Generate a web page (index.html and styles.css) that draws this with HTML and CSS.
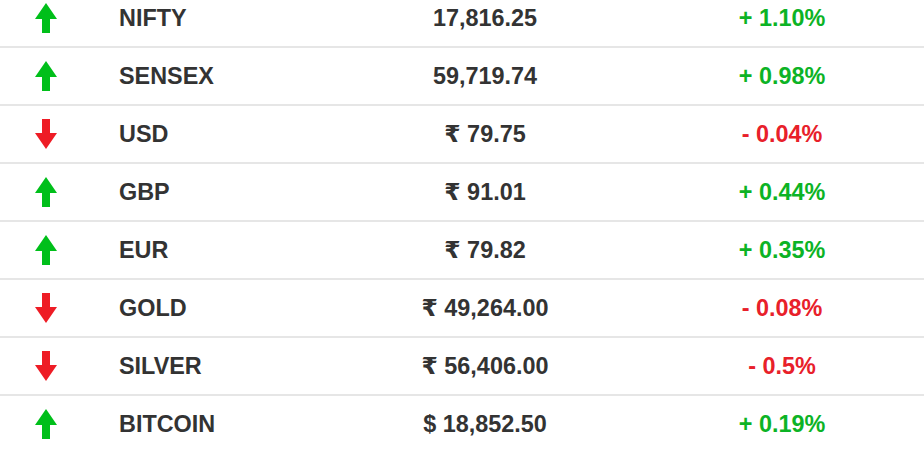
FILE: index.html
```html
<!DOCTYPE html>
<html>
<head>
<meta charset="utf-8">
<link rel="stylesheet" href="styles.css">
</head>
<body>
<div class="table">
  <div class="row"><div class="ic"><svg class="arrow up" viewBox="0 0 22 30"><path d="M11 0 L22 16 L15 16 L15 30 L7 30 L7 16 L0 16 Z"/></svg></div><div class="name">NIFTY</div><div class="val">17,816.25</div><div class="chg pos">+ 1.10%</div></div>
  <div class="row"><div class="ic"><svg class="arrow up" viewBox="0 0 22 30"><path d="M11 0 L22 16 L15 16 L15 30 L7 30 L7 16 L0 16 Z"/></svg></div><div class="name">SENSEX</div><div class="val">59,719.74</div><div class="chg pos">+ 0.98%</div></div>
  <div class="row"><div class="ic"><svg class="arrow down" viewBox="0 0 22 30"><path d="M7 0 L15 0 L15 14 L22 14 L11 30 L0 14 L7 14 Z"/></svg></div><div class="name">USD</div><div class="val">₹ 79.75</div><div class="chg neg">- 0.04%</div></div>
  <div class="row"><div class="ic"><svg class="arrow up" viewBox="0 0 22 30"><path d="M11 0 L22 16 L15 16 L15 30 L7 30 L7 16 L0 16 Z"/></svg></div><div class="name">GBP</div><div class="val">₹ 91.01</div><div class="chg pos">+ 0.44%</div></div>
  <div class="row"><div class="ic"><svg class="arrow up" viewBox="0 0 22 30"><path d="M11 0 L22 16 L15 16 L15 30 L7 30 L7 16 L0 16 Z"/></svg></div><div class="name">EUR</div><div class="val">₹ 79.82</div><div class="chg pos">+ 0.35%</div></div>
  <div class="row"><div class="ic"><svg class="arrow down" viewBox="0 0 22 30"><path d="M7 0 L15 0 L15 14 L22 14 L11 30 L0 14 L7 14 Z"/></svg></div><div class="name">GOLD</div><div class="val">₹ 49,264.00</div><div class="chg neg">- 0.08%</div></div>
  <div class="row"><div class="ic"><svg class="arrow down" viewBox="0 0 22 30"><path d="M7 0 L15 0 L15 14 L22 14 L11 30 L0 14 L7 14 Z"/></svg></div><div class="name">SILVER</div><div class="val">₹ 56,406.00</div><div class="chg neg">- 0.5%</div></div>
  <div class="row"><div class="ic"><svg class="arrow up" viewBox="0 0 22 30"><path d="M11 0 L22 16 L15 16 L15 30 L7 30 L7 16 L0 16 Z"/></svg></div><div class="name">BITCOIN</div><div class="val">$ 18,852.50</div><div class="chg pos">+ 0.19%</div></div>
</div>
</body>
</html>
```
FILE: styles.css
```css
html, body {
  margin: 0;
  padding: 0;
  background: #fff;
  overflow: hidden;
}
body {
  font-family: "Liberation Sans", Arial, "DejaVu Sans", sans-serif;
  font-weight: bold;
  font-size: 23.4px;
  color: #333;
}
.table {
  margin-top: -10px;
}
.row {
  display: grid;
  grid-template-columns: 92px 240px 306px 286px;
  height: 56px;
  align-items: center;
  border-bottom: 2px solid #e6e6e6;
}
.row:last-child {
  border-bottom: none;
}
.ic {
  display: flex;
  justify-content: center;
  align-items: center;
}
.arrow {
  width: 22px;
  height: 30px;
  display: block;
}
.arrow.up { fill: #00bf1a; }
.arrow.down { fill: #ee1c25; }
.name {
  padding-left: 27px;
}
.val, .chg {
  text-align: center;
}
.chg {
  padding-left: 2px;
}
.pos { color: #0cb325; }
.neg { color: #e8202a; }
```
